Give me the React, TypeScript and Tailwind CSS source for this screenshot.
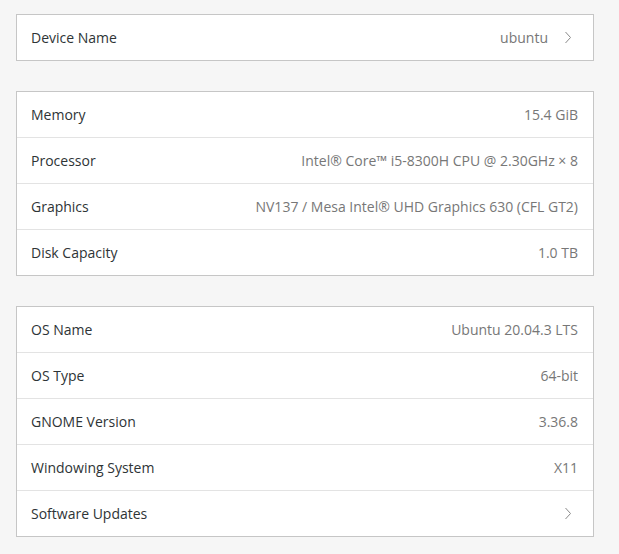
const Chevron = () => (
    <svg width="8" height="13" viewBox="0 0 8 13" className="text-[#8a8a8a]">
        <polyline points="1.5,1 6.5,6.5 1.5,12" fill="none" stroke="currentColor" strokeWidth="1" />
    </svg>
)

type Row = { label: string, value?: string, link?: boolean }

const Row = ({ label, value, link }: Row) => (
    <div className="box-content flex items-center h-[45px] pl-[14px] pr-[15px] border-t border-[#e3e3e3] first:border-t-0">
        <span className="text-[#2e3436]">{label}</span>
        <span className="ml-auto text-[#777]">{value}</span>
        {link && <span className="ml-[16px] mr-[6px] flex items-center"><Chevron /></span>}
    </div>
)

const Card = ({ rows }: { rows: Row[] }) => (
    <div className="w-[578px] bg-white border border-[#c6c6c6]">
        {rows.map(r => <Row key={r.label} {...r} />)}
    </div>
)

export default function App() {
    return <div className="min-h-[554px] bg-[#f6f6f6] pt-[14px] pl-4 flex flex-col gap-[30px] text-[14px]"
        style={{ fontFamily: '"Open Sans", sans-serif' }}>
        <Card rows={[{ label: 'Device Name', value: 'ubuntu', link: true }]} />
        <Card rows={[
            { label: 'Memory', value: '15.4 GiB' },
            { label: 'Processor', value: 'Intel® Core™ i5-8300H CPU @ 2.30GHz × 8' },
            { label: 'Graphics', value: 'NV137 / Mesa Intel® UHD Graphics 630 (CFL GT2)' },
            { label: 'Disk Capacity', value: '1.0 TB' },
        ]} />
        <Card rows={[
            { label: 'OS Name', value: 'Ubuntu 20.04.3 LTS' },
            { label: 'OS Type', value: '64-bit' },
            { label: 'GNOME Version', value: '3.36.8' },
            { label: 'Windowing System', value: 'X11' },
            { label: 'Software Updates', link: true },
        ]} />
    </div>
}
